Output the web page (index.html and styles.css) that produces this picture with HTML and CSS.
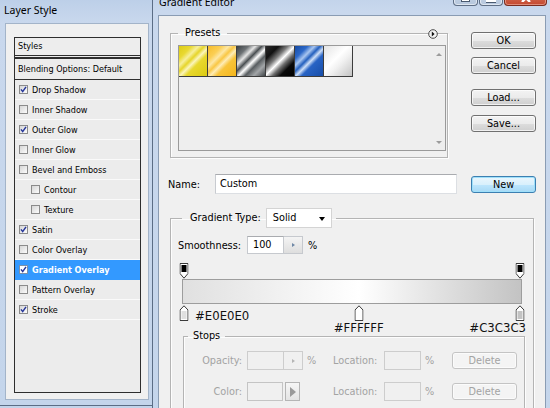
FILE: index.html
```html
<!DOCTYPE html>
<html lang="en">
<head>
<meta charset="utf-8">
<title>Layer Style - Gradient Editor</title>
<link rel="stylesheet" href="styles.css">
</head>
<body>
<main class="desktop">
  <section class="win win-layer">
    <header class="titlebar"><span class="title">Layer Style</span></header>
    <div class="client client-layer">
      <div class="style-list">
        <div class="sl-head">Styles</div>
        <div class="sl-blend">Blending Options: Default</div>
        <ul class="sl-items">
          <li class="sl-item"><span class="cb"><svg viewBox="0 0 7 7"><path d="M1 3.4L2.7 5.6L6 0.9"/></svg></span>Drop Shadow</li>
          <li class="sl-item"><span class="cb off"></span>Inner Shadow</li>
          <li class="sl-item"><span class="cb"><svg viewBox="0 0 7 7"><path d="M1 3.4L2.7 5.6L6 0.9"/></svg></span>Outer Glow</li>
          <li class="sl-item"><span class="cb off"></span>Inner Glow</li>
          <li class="sl-item"><span class="cb off"></span>Bevel and Emboss</li>
          <li class="sl-item sub"><span class="cb off"></span>Contour</li>
          <li class="sl-item sub"><span class="cb off"></span>Texture</li>
          <li class="sl-item"><span class="cb"><svg viewBox="0 0 7 7"><path d="M1 3.4L2.7 5.6L6 0.9"/></svg></span>Satin</li>
          <li class="sl-item"><span class="cb off"></span>Color Overlay</li>
          <li class="sl-item selected"><span class="cb"><svg viewBox="0 0 7 7"><path d="M1 3.4L2.7 5.6L6 0.9"/></svg></span>Gradient Overlay</li>
          <li class="sl-item"><span class="cb off"></span>Pattern Overlay</li>
          <li class="sl-item"><span class="cb"><svg viewBox="0 0 7 7"><path d="M1 3.4L2.7 5.6L6 0.9"/></svg></span>Stroke</li>
        </ul>
      </div>
    </div>
  </section>

  <section class="win win-grad">
    <header class="titlebar">
      <span class="title">Gradient Editor</span>
      <div class="caption">
        <span class="cap cap-min"><i class="glyph-min"></i></span>
        <span class="cap cap-max"><i class="glyph-max"></i></span>
        <span class="cap cap-close"><svg class="glyph-close" width="10" height="8" viewBox="0 0 10 8"><path d="M1 0L9 8M9 0L1 8" stroke="#fff" stroke-width="2.4"/></svg></span>
      </div>
    </header>
    <div class="client client-grad">
      <div class="ge-top">
        <div class="presets-wrap">
          <fieldset class="group presets">
            <legend class="legend">Presets</legend>
            <div class="preset-list">
              <div class="swatches">
                <span class="sw sw-yellow"></span>
                <span class="sw sw-orange"></span>
                <span class="sw sw-chrome"></span>
                <span class="sw sw-black"></span>
                <span class="sw sw-blue"></span>
                <span class="sw sw-silver"></span>
              </div>
              <div class="vscroll"><span class="arr arr-up"></span><span class="arr arr-down"></span></div>
            </div>
          </fieldset>
          <span class="menu-btn"><svg viewBox="0 0 10 10" width="10" height="10"><circle cx="5" cy="5" r="4.3" fill="#f4f4f4" stroke="#4a4a4a" stroke-width="1"/><path d="M3.8 2.6L6.6 5L3.8 7.4Z" fill="#111"/></svg></span>
        </div>
        <div class="btn-col">
          <button class="btn">OK</button>
          <button class="btn btn-cancel">Cancel</button>
          <button class="btn btn-load">Load...</button>
          <button class="btn btn-save">Save...</button>
        </div>
      </div>

      <div class="name-row">
        <span class="lbl name-lbl">Name:</span>
        <span class="textbox name-box">Custom</span>
        <button class="btn btn-default">New</button>
      </div>

      <fieldset class="group gtype">
        <legend class="legend gtype-legend"><span class="gtype-lbl">Gradient Type:</span><span class="select">Solid<span class="caret"></span></span></legend>
        <div class="smooth-row">
          <span class="lbl smooth-lbl">Smoothness:</span>
          <span class="spin"><span class="spin-val">100</span><span class="spin-btn"><span class="tri"></span></span></span>
          <span class="pct">%</span>
        </div>

        <div class="gradient-area">
          <div class="stop-track">
            <span class="stop" style="left:0%"><svg width="9" height="16" viewBox="0 0 9 16"><path d="M0.5 0.5H8.5V10.5L4.5 15.2L0.5 10.5Z" fill="#fff" stroke="#3a3a3a"/><rect x="2" y="2" width="5" height="7" fill="#000"/></svg></span>
            <span class="stop" style="left:100%"><svg width="9" height="16" viewBox="0 0 9 16"><path d="M0.5 0.5H8.5V10.5L4.5 15.2L0.5 10.5Z" fill="#fff" stroke="#3a3a3a"/><rect x="2" y="2" width="5" height="7" fill="#000"/></svg></span>
          </div>
          <div class="gbar"></div>
          <div class="stop-track">
            <span class="stop" style="left:0%"><svg width="9" height="16" viewBox="0 0 9 16"><path d="M4.5 0.8L8.5 5V15.5H0.5V5Z" fill="#fff" stroke="#3a3a3a"/><rect x="2" y="6" width="5" height="8" fill="#E0E0E0"/></svg></span>
            <span class="stop" style="left:52%"><svg width="9" height="16" viewBox="0 0 9 16"><path d="M4.5 0.8L8.5 5V15.5H0.5V5Z" fill="#fff" stroke="#3a3a3a"/><rect x="2" y="6" width="5" height="8" fill="#FFFFFF"/></svg></span>
            <span class="stop" style="left:100%"><svg width="9" height="16" viewBox="0 0 9 16"><path d="M4.5 0.8L8.5 5V15.5H0.5V5Z" fill="#fff" stroke="#3a3a3a"/><rect x="2" y="6" width="5" height="8" fill="#C3C3C3"/></svg></span>
            <span class="hex hex-left">#E0E0E0</span>
            <span class="hex hex-mid" style="left:52%">#FFFFFF</span>
            <span class="hex hex-right">#C3C3C3</span>
          </div>
        </div>

        <fieldset class="group stops">
          <legend class="legend stops-legend">Stops</legend>
          <div class="stops-grid">
            <span class="lbl dis right">Opacity:</span>
            <span class="spin dis"><span class="spin-val"></span><span class="spin-btn"><span class="tri"></span></span></span>
            <span class="pct dis">%</span>
            <span class="lbl dis">Location:</span>
            <span class="textbox dis"></span>
            <span class="pct dis pct2">%</span>
            <button class="btn dis">Delete</button>

            <span class="lbl dis right">Color:</span>
            <span class="colorpick"><span class="color-box"></span><span class="color-arrow"><span class="tri-big"></span></span></span>
            <span></span>
            <span class="lbl dis">Location:</span>
            <span class="textbox dis"></span>
            <span class="pct dis pct2">%</span>
            <button class="btn dis">Delete</button>
          </div>
        </fieldset>
      </fieldset>
    </div>
  </section>
</main>
</body>
</html>
```

FILE: styles.css
```css
* { box-sizing: border-box; }
html, body { margin: 0; padding: 0; }
body {
  width: 550px;
  height: 408px;
  overflow: hidden;
  background: #c3d4ea;
  font-family: "DejaVu Sans Condensed", "DejaVu Sans", sans-serif;
  font-stretch: condensed;
  color: #000;
}
.desktop { position: relative; width: 550px; height: 408px; overflow: hidden; }

/* windows */
.win {
  position: absolute;
  display: flex;
  flex-direction: column;
  border: 1px solid #5b6d85;
  background: linear-gradient(to bottom, #b9cde7 0, #c9d8ed 30px, #c4d5eb 100%);
}
.titlebar {
  display: flex;
  align-items: flex-start;
  flex: none;
}
.title {
  font-family: "Noto Sans", "Open Sans", sans-serif;
  font-stretch: normal;
  font-size: 10.5px;
  line-height: 14px;
  color: #000;
}

.win-layer { left: -4px; top: -8px; width: 157px; height: 414px; padding: 0 3px 5px 8px; }
.win-layer .titlebar { height: 30px; padding-top: 10px; }
.win-layer .title { margin-left: -1px; }

.win-grad { left: 152px; top: -20px; width: 400px; height: 470px; }
.win-grad .titlebar { height: 34px; padding-left: 6px; padding-top: 14px; }

.caption { margin-left: auto; margin-right: 4px; margin-top: -14px; display: flex; gap: 1px; }
.cap {
  height: 25px;
  border: 1px solid #5f6f86;
  border-top: none;
  border-radius: 0 0 4px 4px;
  background: linear-gradient(to bottom, #d3deec, #b6c7dd);
  box-shadow: inset 0 0 0 1px rgba(255,255,255,0.55);
  display: flex;
  justify-content: center;
  align-items: flex-end;
  padding-bottom: 3px;
}
.cap-min { width: 25px; }
.cap-max { width: 24px; }
.cap-close {
  width: 43px;
  background: linear-gradient(to bottom, #e19a88, #c5492f);
  border-color: #7a2c1f;
  box-shadow: inset 0 0 0 1px rgba(255,220,210,0.45);
}
.glyph-min { display: block; width: 9px; height: 3px; background: #fff; border: 1px solid #4a5a70; }
.glyph-max { display: block; width: 10px; height: 4px; border: 2px solid #fff; border-top: none; box-shadow: 0 1px 0 #4a5a70; }
.glyph-close { display: block; }

.client {
  flex: 1;
  background: #f0f0f0;
  overflow: hidden;
}
.client-layer {
  border: 1px solid #a3b4c9;
  padding: 13px 7px 6px 8px;
  display: flex;
  flex-direction: column;
}
.client-grad {
  margin: 0 5px;
  border: 1px solid #8a9cb3;
  padding: 0 0 0 11px;
  font-size: 10.8px;
}

/* layer style list */
.style-list {
  flex: 1;
  border: 1px solid #2e2e2e;
  background: #ececec;
  font-size: 9px;
  display: flex;
  flex-direction: column;
}
.sl-head {
  height: 18px;
  line-height: 17px;
  padding-left: 3px;
  border-bottom: 1px solid #2e2e2e;
  margin-bottom: 1px;
  background: #ededed;
}
.sl-blend {
  height: 23px;
  line-height: 20px;
  padding-left: 3px;
  border-top: 2px solid #2e2e2e;
  border-bottom: 1px solid #2e2e2e;
}
.sl-items { list-style: none; margin: 0; padding: 0; }
.sl-item {
  height: 20px;
  border-bottom: 1px solid #fafafa;
  display: flex;
  align-items: center;
  gap: 4px;
  padding-left: 4px;
  white-space: nowrap;
}
.sl-item.sub { padding-left: 16px; }
.sl-item.selected { background: #3399ff; color: #fff; font-weight: bold; border-bottom-color: #3399ff; }
.cb {
  flex: none;
  width: 9px;
  height: 9px;
  border: 1px solid #8b8b8b;
  background: linear-gradient(135deg, #d6d6d6, #fbfbfb);
  display: flex;
  align-items: center;
  justify-content: center;
}
.sl-item.selected .cb { background: #fff; border-color: #7b8fa8; }
.cb svg { width: 7px; height: 7px; }
.cb path { fill: none; stroke: #26369a; stroke-width: 1.5; }

/* gradient editor top */
.ge-top { display: flex; margin-top: 11px; }
.presets-wrap { position: relative; }
.group {
  margin: 0;
  min-width: 0;
  border: 1px solid #b4b4b4;
  box-shadow: inset 1px 1px 0 #fdfdfd, 1px 1px 0 #fdfdfd;
}
.legend {
  line-height: 12px;
  font-size: 10.8px;
}
.presets { width: 278px; padding: 6px 1px 6px 7px; }
.presets .legend { padding: 0 7px; }
.preset-list {
  height: 106px;
  border: 1px solid #9a9a9a;
  background: #eeeeee;
  display: flex;
}
.swatches { display: flex; align-self: flex-start; }
.sw {
  width: 29px;
  height: 31px;
  border-right: 1px solid #3c3c3c;
  border-bottom: 1px solid #3c3c3c;
}
.sw-yellow { background: linear-gradient(135deg, #ddcc14 0%, #e9d932 22%, #f7ef9c 34%, #e6d52a 44%, #fbf5bc 53%, #e8d82e 63%, #dccb12 100%); }
.sw-orange { background: linear-gradient(135deg, #f6bb28 0%, #fbcf55 24%, #fde7a4 36%, #f9c744 46%, #feecb6 55%, #f8c43a 66%, #f4b61c 100%); }
.sw-chrome { background: linear-gradient(135deg, #3b4043 0%, #6d7275 20%, #e6e6e6 32%, #4a4f52 43%, #ffffff 54%, #585d60 65%, #a3a6a8 80%, #3f4447 100%); }
.sw-black { background: linear-gradient(135deg, #2a2a2a 0%, #111 22%, #7a7a7a 38%, #ffffff 50%, #6e6e6e 62%, #0a0a0a 76%, #000 100%); }
.sw-blue { background: linear-gradient(135deg, #164aa2 0%, #2c68c8 22%, #a9c6f0 34%, #235fbe 44%, #cfe0f8 53%, #2863c4 63%, #174da8 100%); }
.sw-silver { background: linear-gradient(135deg, #e4e4e4 0%, #ffffff 42%, #f2f2f2 58%, #c3c3c3 100%); }
.vscroll {
  margin-left: auto;
  width: 13px;
  display: flex;
  flex-direction: column;
  justify-content: space-between;
  align-items: center;
  padding: 7px 0 6px;
}
.arr { width: 0; height: 0; border-left: 3px solid transparent; border-right: 3px solid transparent; }
.arr-up { border-bottom: 3px solid #9b9b9b; }
.arr-down { border-top: 3px solid #9b9b9b; }
.menu-btn { position: absolute; left: 258px; top: 2px; width: 10px; height: 10px; display: block; }
.menu-btn svg { display: block; }

.btn-col { display: flex; flex-direction: column; margin-left: 23px; margin-top: 5px; }
.btn {
  font: inherit;
  font-size: 10.8px;
  color: #000;
  width: 65px;
  height: 17px;
  padding: 0;
  line-height: 15px;
  border: 1px solid #707070;
  border-radius: 3px;
  background: linear-gradient(to bottom, #f3f3f3 0%, #ebebeb 50%, #dddddd 51%, #cfcfcf 100%);
  box-shadow: inset 0 0 0 1px rgba(255,255,255,0.7);
  text-align: center;
}
.btn-cancel { margin-top: 8px; }
.btn-load { margin-top: 15px; }
.btn-save { margin-top: 9px; }
.btn-default {
  border-color: #3c7fb1;
  background: linear-gradient(to bottom, #eaf6fd 0%, #d9f0fc 50%, #bee6fd 51%, #a7d9f5 100%);
  box-shadow: inset 0 0 0 1px #9fe0fa;
}

/* name row */
.name-row { display: flex; align-items: center; margin-top: 16px; margin-left: -2px; }
.lbl { white-space: nowrap; }
.name-lbl { width: 47px; }
.textbox {
  display: block;
  background: #fff;
  border: 1px solid #dcdfe3;
  border-top-color: #a9abaf;
  border-left-color: #c8cbd0;
}
.name-box { width: 242px; height: 20px; line-height: 18px; padding-left: 4px; }
.name-row .btn { margin-left: 14px; }

/* gradient type group */
.gtype { width: 364px; margin-top: 14px; padding: 8px 8px 40px 7px; }
.gtype-legend {
  display: flex;
  align-items: center;
  margin-left: 4px;
  padding: 0 4px 0 8px;
  line-height: 20px;
}
.gtype-lbl { margin-right: 5px; }
.select {
  position: relative;
  width: 66px;
  height: 20px;
  line-height: 18px;
  background: #fff;
  border: 1px solid #d4d4d4;
  padding-left: 6px;
}
.caret {
  position: absolute;
  right: 6px;
  top: 8px;
  width: 0;
  height: 0;
  border-left: 3.5px solid transparent;
  border-right: 3.5px solid transparent;
  border-top: 4px solid #000;
}
.smooth-row { display: flex; align-items: center; height: 18px; }
.smooth-lbl { width: 69px; }
.spin { display: flex; height: 18px; }
.spin-val {
  width: 37px;
  height: 18px;
  line-height: 16px;
  padding-left: 5px;
  background: #fff;
  border: 1px solid #c6c9ce;
  border-top-color: #a9abaf;
}
.spin-btn {
  width: 19px;
  height: 18px;
  border: 1px solid #c6c9ce;
  border-left: none;
  background: linear-gradient(to bottom, #f4f4f4, #dedede);
  display: flex;
  align-items: center;
  justify-content: center;
}
.tri { width: 0; height: 0; border-top: 2px solid transparent; border-bottom: 2px solid transparent; border-left: 3px solid #6f88a6; }
.pct { margin-left: 5px; }

.gradient-area { margin-top: 9px; margin-left: 4px; width: 340px; }
.stop-track { position: relative; height: 16px; margin: 0 2px; }
.stop { position: absolute; top: 0; width: 9px; height: 16px; transform: translateX(-50%); }
.stop svg { display: block; }
.gbar {
  height: 25px;
  border: 1px solid #9d9d9d;
  background: linear-gradient(to right, #e0e0e0 0%, #ffffff 52%, #c3c3c3 100%);
  margin-bottom: 1px;
}
.hex {
  position: absolute;
  font-size: 13px;
  line-height: 15px;
  color: #111;
  white-space: nowrap;
}
.hex-left { left: 11px; top: 3px; }
.hex-mid { top: 15px; transform: translateX(-50%); }
.hex-right { right: -6px; top: 15px; }

/* stops group */
.stops { margin: 9px 0 0 5px; width: 342px; padding: 9px 0 30px 0; }
.stops-legend { margin-left: 4px; padding: 0 5px; }
.stops-grid {
  display: grid;
  grid-template-columns: 63px 56px 30px 51px 37px 31px 65px;
  grid-auto-rows: 19px;
  row-gap: 12px;
  align-items: center;
}
.dis { color: #a3a3a3; }
.right { text-align: right; padding-right: 5px; }
.spin.dis { height: 19px; }
.spin.dis .spin-val { height: 19px; background: #f0f0f0; border-color: #cdcdcd; }
.spin.dis .spin-btn { height: 19px; border-color: #cdcdcd; background: #f0f0f0; }
.spin.dis .tri { border-left-color: #b5b5b5; }
.pct.dis { margin-left: 0; padding-left: 4px; }
.pct2 { padding-left: 3px; }
.textbox.dis { height: 19px; background: #f0f0f0; border: 1px solid #cdcdcd; }
.btn.dis {
  color: #a3a3a3;
  border-color: #c4c4c4;
  background: #f4f4f4;
  box-shadow: inset 0 0 0 1px #fbfbfb;
}
.colorpick { display: flex; gap: 2px; height: 19px; }
.color-box { width: 36px; height: 19px; border: 1px solid #c4c4c4; background: #f0f0f0; }
.color-arrow {
  width: 15px;
  height: 19px;
  border: 1px solid #b5b5b5;
  background: linear-gradient(to bottom, #f6f6f6, #e4e4e4);
  display: flex;
  align-items: center;
  justify-content: center;
}
.tri-big { width: 0; height: 0; border-top: 5px solid transparent; border-bottom: 5px solid transparent; border-left: 6px solid #9a9a9a; }
```
